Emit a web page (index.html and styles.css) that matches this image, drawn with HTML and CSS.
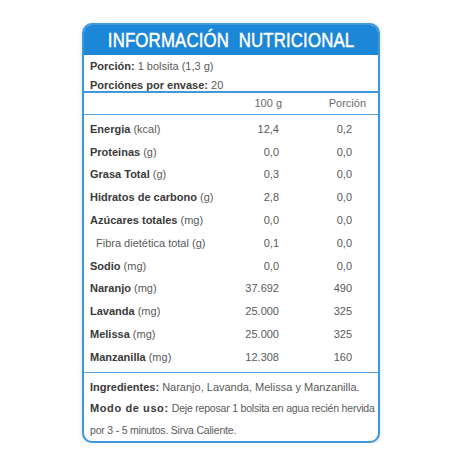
FILE: index.html
```html
<!DOCTYPE html>
<html lang="es">
<head>
<meta charset="utf-8">
<link rel="stylesheet" href="styles.css">
</head>
<body>
<div class="card">
  <div class="title"><span class="title-text">INFORMACIÓN&nbsp; NUTRICIONAL</span></div>
  <div class="portion">
    <div><b>Porción:</b> 1 bolsita (1,3 g)</div>
    <div><b>Porciónes por envase:</b> 20</div>
  </div>
  <div class="head-row">
    <span></span><span class="num">100 g</span><span class="num">Porción</span>
  </div>
  <div class="rows">
    <div class="row"><span><b>Energia</b> (kcal)</span><span class="num">12,4</span><span class="num">0,2</span></div>
    <div class="row"><span><b>Proteinas</b> (g)</span><span class="num">0,0</span><span class="num">0,0</span></div>
    <div class="row"><span><b>Grasa Total</b> (g)</span><span class="num">0,3</span><span class="num">0,0</span></div>
    <div class="row"><span><b>Hidratos de carbono</b> (g)</span><span class="num">2,8</span><span class="num">0,0</span></div>
    <div class="row"><span><b>Azúcares totales</b> (mg)</span><span class="num">0,0</span><span class="num">0,0</span></div>
    <div class="row"><span class="sub">Fibra dietética total (g)</span><span class="num">0,1</span><span class="num">0,0</span></div>
    <div class="row"><span><b>Sodio</b> (mg)</span><span class="num">0,0</span><span class="num">0,0</span></div>
    <div class="row"><span><b>Naranjo</b> (mg)</span><span class="num">37.692</span><span class="num">490</span></div>
    <div class="row"><span><b>Lavanda</b> (mg)</span><span class="num">25.000</span><span class="num">325</span></div>
    <div class="row"><span><b>Melissa</b> (mg)</span><span class="num">25.000</span><span class="num">325</span></div>
    <div class="row"><span><b>Manzanilla</b> (mg)</span><span class="num">12.308</span><span class="num">160</span></div>
  </div>
  <div class="footer">
    <div><b>Ingredientes:</b> Naranjo, Lavanda, Melissa y Manzanilla.</div>
    <div><b class="wide">Modo de uso:</b> <span class="tight">Deje reposar 1 bolsita en agua recién hervida</span></div>
    <div><span class="tight">por 3 - 5 minutos. Sirva Caliente.</span></div>
  </div>
</div>
</body>
</html>
```
FILE: styles.css
```css
* { box-sizing: border-box; }
html, body { margin: 0; padding: 0; background: #ffffff; }
body {
  font-family: "Liberation Sans", Arial, sans-serif;
  font-size: 11px;
  color: #5a5a5a;
  padding: 23px 0 0 82px;
}
b { color: #3a3a3a; font-weight: 700; }
.card {
  width: 298px;
  height: 420px;
  border: 2px solid #3f97dc;
  border-radius: 10px;
  overflow: hidden;
  background: #fff;
  box-shadow: 0 1px 4px rgba(80, 130, 180, 0.25);
  display: flex;
  flex-direction: column;
}
.title {
  background: #1c86d7;
  height: 30px;
  display: flex;
  align-items: center;
  justify-content: center;
  color: #ffffff;
  white-space: nowrap;
}
.title-text {
  display: inline-block;
  font-size: 21px;
  font-weight: 400;
  -webkit-text-stroke: 0.5px #ffffff;
  transform: scaleX(0.8);
  letter-spacing: 0.2px;
}
.portion {
  padding: 2px 6px 0 6px;
  line-height: 19px;
  height: 38px;
  border-bottom: 2px solid #3f97dc;
}
.head-row {
  display: grid;
  grid-template-columns: 1fr 60px 84px;
  padding-right: 12px;
  height: 22px;
  line-height: 21px;
  border-bottom: 1px solid #5aa5e0;
  color: #6a6a6a;
}
.rows {
  padding: 3px 26px 3px 6px;
  border-bottom: 1px solid #5aa5e0;
}
.row {
  display: grid;
  grid-template-columns: 1fr 60px 73px;
  line-height: 22.8px;
  height: 22.8px;
}
.num { text-align: right; }
.sub { padding-left: 6px; color: #5a5a5a; }
.footer {
  padding: 4px 6px 0 6px;
  line-height: 21.5px;
  white-space: nowrap;
}
.wide { letter-spacing: 0.6px; }
.tight { letter-spacing: -0.2px; font-size: 10.5px; }
```
